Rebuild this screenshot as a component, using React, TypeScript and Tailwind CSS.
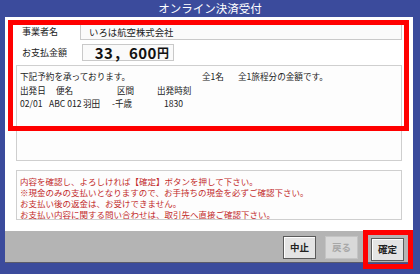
const JP = "font-['Noto_Sans_CJK_JP',sans-serif]";

const NOTICES = [
  "内容を確認し、よろしければ【確定】ボタンを押して下さい。",
  "※現金のみの支払いとなりますので、お手持ちの現金を必ずご確認下さい。",
  "お支払い後の返金は、お受けできません。",
  "お支払い内容に関する問い合わせは、取引先へ直接ご確認下さい。",
];

function FooterButton({ label, disabled }: { label: string; disabled?: boolean }) {
  return (
    <button
      className={
        disabled
          ? "w-[33px] h-[23px] text-[9.5px] font-bold text-[#a8a8a8] bg-[#d9d9d9] border border-[#c4c4c4]"
          : "w-[33px] h-[23px] text-[9.5px] font-bold text-[#222] bg-[#e4e4e4] border border-[#5a5a5a] shadow-[inset_1px_1px_0_#fff]"
      }
    >
      {label}
    </button>
  );
}

export default function App() {
  return (
    <div className={`relative w-[420px] h-[274px] bg-[#3b4b9c] flex flex-col ${JP}`}>
      {/* Title */}
      <div className="h-[17px] flex items-center justify-center text-white text-[11.5px] leading-none">
        オンライン決済受付
      </div>

      {/* Panel */}
      <div className="ml-[5px] mr-[7px] h-[246px] flex flex-col bg-white">
        <div className="flex-1 flex flex-col px-[11px] pt-[7px]">
          {/* 事業者名 */}
          <div className="flex items-center h-[16px]">
            <span className="w-[64px] pl-[6px] text-[9px] text-[#222]">事業者名</span>
            <div className="flex-1 h-[16px] flex items-center pl-[8px] border border-[#c9c9c9] bg-[#fafafa] text-[9.4px] text-[#222]">
              いろは航空株式会社
            </div>
          </div>

          {/* お支払金額 */}
          <div className="flex items-center h-[17px] mt-[4px]">
            <span className="w-[66px] pl-[6px] text-[9px] text-[#222]">お支払金額</span>
            <div className="w-[92px] h-[17px] flex items-center justify-end pr-[4px] border border-[#c9c9c9] bg-[#fafafa] text-[#111]">
              <span className="text-[15px] font-bold tracking-[0.5px] leading-none">33，600</span>
              <span className="text-[12px] font-bold leading-none">円</span>
            </div>
          </div>

          {/* Reservation info */}
          <div className="mt-[4px] h-[96px] border border-[#cfcfcf] bg-[#fdfdfd] px-[3px] pt-[4px] text-[8.6px] leading-[13.5px] text-[#222]">
            <div className="flex">
              <span className="w-[182px]">下記予約を承っております。</span>
              <span className="w-[36px]">全1名</span>
              <span>全1旅程分の金額です。</span>
            </div>
            <div className="flex">
              <span className="w-[36px]">出発日</span>
              <span className="w-[61px]">便名</span>
              <span className="w-[40px]">区間</span>
              <span>出発時刻</span>
            </div>
            <div className="flex">
              <span className="w-[29px] shrink-0">02/01</span>
              <span className="w-[34px] shrink-0 whitespace-nowrap">ABC 012</span>
              <span className="w-[29px] shrink-0">羽田</span>
              <span className="w-[52px] shrink-0">-千歳</span>
              <span>1830</span>
            </div>
          </div>

          {/* Notices */}
          <div className="mt-[9px] h-[50px] border border-[#cfcfcf] bg-[#fdfdfd] px-[3px] pt-[5px] text-[8.5px] leading-[11px] text-[#c22a2a]">
            {NOTICES.map((line) => (
              <div key={line} className="h-[11px] whitespace-nowrap">
                {line}
              </div>
            ))}
          </div>
        </div>

        {/* Footer */}
        <div className="h-[32px] bg-[#b4b4b4] border-b border-[#5b5b6a] flex items-center justify-end gap-[9px] pr-[9px] pt-[2px]">
          <FooterButton label="中止" />
          <FooterButton label="戻る" disabled />
          <div className="ml-[4px]">
            <FooterButton label="確定" />
          </div>
        </div>
      </div>

      {/* Red annotation boxes */}
      <div className="absolute left-[8px] top-[20px] w-[401px] h-[111px] border-[5px] border-[#ff0000] pointer-events-none" />
      <div className="absolute left-[363px] top-[230px] w-[50px] h-[39px] border-[5px] border-[#ff0000] pointer-events-none" />
    </div>
  );
}
